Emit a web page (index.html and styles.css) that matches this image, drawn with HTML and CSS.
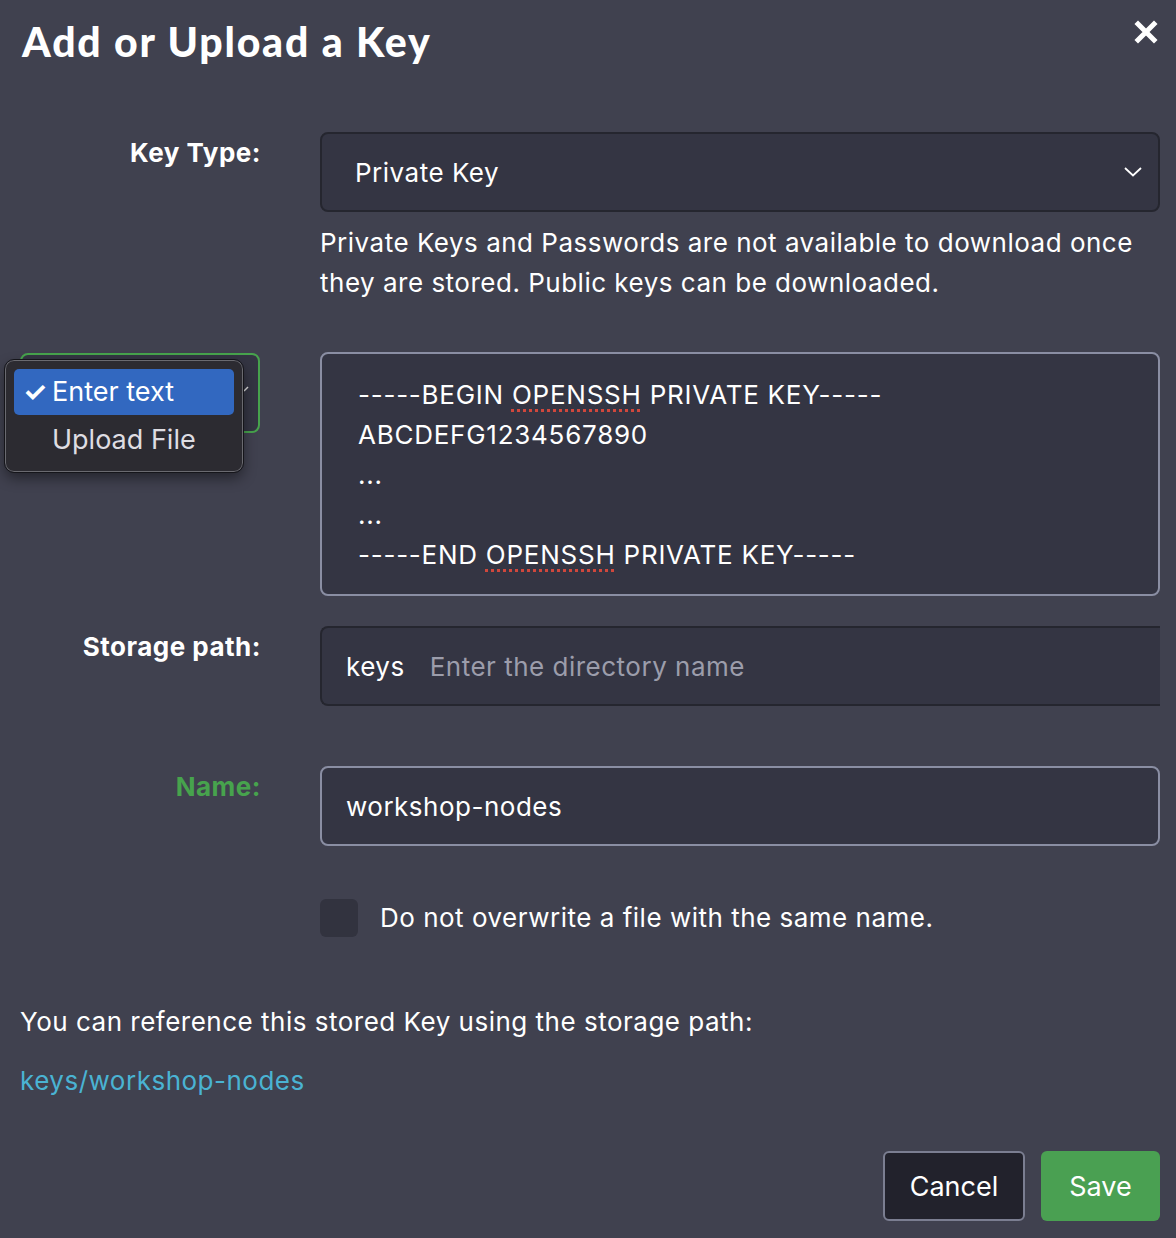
FILE: index.html
```html
<!DOCTYPE html>
<html lang="en">
<head>
  <meta charset="UTF-8" />
  <meta name="viewport" content="width=device-width, initial-scale=1.0" />
  <title>Add or Upload a Key</title>
  <link rel="stylesheet" href="styles.css">
</head>
<body>

<div class="modal">
  <div class="modal-header">
    <h1>Add or Upload a Key</h1>
    <button class="close" type="button" aria-label="Close">
      <svg width="24" height="24" viewBox="0 0 24 24"><path d="M4 4 L20 20 M20 4 L4 20" stroke="#fff" stroke-width="5" stroke-linecap="square"/></svg>
    </button>
  </div>

  <form class="key-form">
    <div class="row row-type">
      <label class="label">Key Type:</label>
      <div class="field">
        <div class="select">
          <span>Private Key</span>
          <svg class="chevron" width="18" height="10" viewBox="0 0 18 10"><path d="M1 1 L9 8.5 L17 1" fill="none" stroke="#fff" stroke-width="1.8"/></svg>
        </div>
        <p class="help">Private Keys and Passwords are not available to download once they are stored. Public keys can be downloaded.</p>
      </div>
    </div>

    <div class="row row-key">
      <div class="label">
        <div class="mode-select">
          <svg class="mini-chevron" width="10" height="8" viewBox="0 0 10 8"><path d="M1 6 L5 2" fill="none" stroke="#ddd" stroke-width="1.5"/></svg>
        </div>
        <ul class="menu">
          <li class="active"><span class="check">&#10003;</span>Enter text</li>
          <li>Upload File</li>
        </ul>
      </div>
      <div class="field">
        <div class="keybox">
          <div>-----BEGIN <span class="typo">OPENSSH</span> PRIVATE KEY-----</div>
          <div>ABCDEFG1234567890</div>
          <div>...</div>
          <div>...</div>
          <div>-----END <span class="typo">OPENSSH</span> PRIVATE KEY-----</div>
        </div>
      </div>
    </div>

    <div class="row row-path">
      <label class="label">Storage path:</label>
      <div class="field">
        <div class="input-group">
          <span class="prefix">keys</span>
          <span class="placeholder">Enter the directory name</span>
        </div>
      </div>
    </div>

    <div class="row row-name">
      <label class="label label-ok">Name:</label>
      <div class="field">
        <div class="input">workshop-nodes</div>
      </div>
    </div>

    <div class="row row-check">
      <div class="label"></div>
      <div class="field check-field">
        <span class="checkbox"></span>
        <span>Do not overwrite a file with the same name.</span>
      </div>
    </div>

    <p class="reference">You can reference this stored Key using the storage path:</p>
    <a class="path-link" href="#">keys/workshop-nodes</a>

    <div class="actions">
      <button type="button" class="btn btn-cancel">Cancel</button>
      <button type="button" class="btn btn-save">Save</button>
    </div>
  </form>
</div>

</body>
</html>
```

FILE: styles.css
```css
/* General Styling */
body {
  font-family: "Inter", sans-serif;
  background-color: #40414f;
  color: #fff;
  margin: 0;
  padding: 0;
}

.modal {
  padding: 0 16px 0 20px;
}

/* Header */
.modal-header {
  display: flex;
  justify-content: space-between;
  align-items: flex-start;
  height: 132px;
}

.modal-header h1 {
  margin: 16px 0 0 2px;
  font-family: "Lato", sans-serif;
  font-weight: 900;
  font-size: 41px;
  line-height: 52px;
  letter-spacing: 1.8px;
}

.close {
  background: none;
  border: none;
  padding: 0;
  margin: 20px 2px 0 0;
  cursor: pointer;
}

/* Form rows */
.row {
  display: grid;
  grid-template-columns: 240px 840px;
  column-gap: 60px;
}

.label {
  text-align: right;
  font-weight: 700;
  font-size: 26px;
  line-height: 40px;
  letter-spacing: 0.5px;
  margin-right: -1px;
  padding-top: 1px;
  position: relative;
}

.label-ok {
  color: #47a34d;
}

.field {
  font-size: 26px;
  line-height: 40px;
  letter-spacing: 0.5px;
}

.select {
  height: 80px;
  box-sizing: border-box;
  border: 2px solid #25262f;
  border-radius: 8px;
  background-color: #343543;
  display: flex;
  align-items: center;
  justify-content: space-between;
  padding: 2px 16px 0 33px;
}

.chevron {
  margin-top: -2px;
}

.help {
  margin: 11px 0 0 0;
}

.row-key {
  margin-top: 49px;
}

.mode-select {
  width: 240px;
  height: 80px;
  box-sizing: border-box;
  border: 2px solid #47a34d;
  border-radius: 8px;
  background-color: #343543;
}

.mini-chevron {
  position: absolute;
  left: 223px;
  top: 33px;
}

.menu {
  position: absolute;
  left: -15px;
  top: 8px;
  width: 238px;
  box-sizing: border-box;
  margin: 0;
  padding: 8px;
  list-style: none;
  background-color: #2c2b31;
  border: 1px solid #6a6a70;
  outline: 1px solid #15151a;
  border-radius: 9px;
  box-shadow: 0 6px 14px rgba(0, 0, 0, 0.45);
  text-align: left;
  font-weight: 400;
  font-size: 27px;
  letter-spacing: 0;
}

.menu li {
  height: 46px;
  line-height: 46px;
  padding-left: 38px;
  border-radius: 5px;
  color: #dedde2;
  position: relative;
}

.menu li + li {
  margin-top: 2px;
}

.menu li.active {
  background-color: #3268c0;
  color: #fff;
}

.check {
  position: absolute;
  left: 9px;
  font-weight: 700;
}

.keybox {
  height: 244px;
  box-sizing: border-box;
  border: 2px solid #8a8ea3;
  border-radius: 8px;
  background-color: #343543;
  padding: 21px 36px 19px;
  letter-spacing: 0.75px;
}

.typo {
  text-decoration: underline dotted #d0473c;
  text-decoration-thickness: 3px;
  text-underline-offset: 5px;
}

.row-path {
  margin-top: 30px;
}

.input-group {
  height: 80px;
  box-sizing: border-box;
  border: 2px solid #25262f;
  border-right: none;
  border-radius: 8px 0 0 8px;
  background-color: #343543;
  display: flex;
  align-items: center;
  padding: 2px 0 0 24px;
}

.prefix {
  margin-right: 25px;
}

.placeholder {
  color: #9c9dab;
}

.row-name {
  margin-top: 60px;
}

.input {
  height: 80px;
  box-sizing: border-box;
  border: 2px solid #8a8ea3;
  border-radius: 8px;
  background-color: #343543;
  display: flex;
  align-items: center;
  padding: 2px 0 0 24px;
}

.row-check {
  margin-top: 52px;
}

.check-field {
  display: flex;
  align-items: center;
  gap: 22px;
}

.checkbox {
  width: 38px;
  height: 38px;
  border-radius: 6px;
  background-color: #32333f;
}

/* Storage path reference */
.reference {
  margin: 64px 0 0 0;
  font-size: 26px;
  line-height: 40px;
  letter-spacing: 0.5px;
}

.path-link {
  display: block;
  margin-top: 19px;
  font-size: 26px;
  line-height: 40px;
  letter-spacing: 0.5px;
  color: #4ab3d3;
  text-decoration: none;
}

/* Buttons */
.actions {
  display: flex;
  justify-content: flex-end;
  gap: 16px;
  margin-top: 50px;
}

.btn {
  height: 70px;
  border-radius: 6px;
  font-family: "Inter", sans-serif;
  font-size: 27px;
  color: #fff;
  cursor: pointer;
  box-sizing: border-box;
}

.btn-cancel {
  width: 142px;
  background-color: #22222c;
  border: 2px solid #7b7e91;
}

.btn-save {
  width: 119px;
  background-color: #4aa052;
  border: none;
}
```
